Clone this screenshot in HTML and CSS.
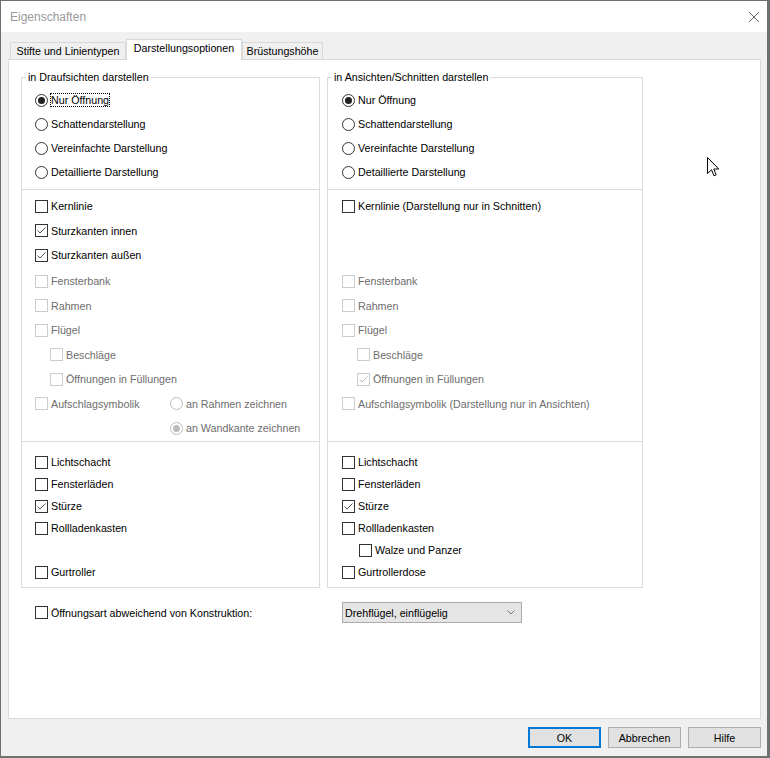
FILE: index.html
```html
<!DOCTYPE html>
<html lang="de">
<head>
<meta charset="utf-8">
<title>Eigenschaften</title>
<link rel="stylesheet" href="styles.css">
</head>
<body>
<div class="window">
  <div class="titlebar">
    <span class="title">Eigenschaften</span>
    <svg class="close" width="10" height="10" viewBox="0 0 10 10"><path d="M0 0L10 10M10 0L0 10"/></svg>
  </div>
  <div class="client">
    <div class="tabs">
      <div class="tab t1">Stifte und Linientypen</div>
      <div class="tab t2 active">Darstellungsoptionen</div>
      <div class="tab t3">Brüstungshöhe</div>
    </div>
    <div class="panel">
      <div class="groups">
        <div class="group left">
          <div class="group-title">in Draufsichten darstellen</div>
          <div class="sec sec1">
            <div class="row"><span class="radio on"></span><span class="focus">Nur Öffnung</span></div>
            <div class="row"><span class="radio"></span>Schattendarstellung</div>
            <div class="row"><span class="radio"></span>Vereinfachte Darstellung</div>
            <div class="row"><span class="radio"></span>Detaillierte Darstellung</div>
          </div>
          <div class="sec sec2">
            <div class="row"><span class="check"></span>Kernlinie</div>
            <div class="row"><span class="check"><svg viewBox="0 0 11 11"><path d="M1.5 5.5L4 8L9.5 2.5"/></svg></span>Sturzkanten innen</div>
            <div class="row"><span class="check"><svg viewBox="0 0 11 11"><path d="M1.5 5.5L4 8L9.5 2.5"/></svg></span>Sturzkanten außen</div>
            <div class="row dis gap-before"><span class="check"></span>Fensterbank</div>
            <div class="row dis"><span class="check"></span>Rahmen</div>
            <div class="row dis"><span class="check"></span>Flügel</div>
            <div class="row dis sub"><span class="check"></span>Beschläge</div>
            <div class="row dis sub"><span class="check"></span>Öffnungen in Füllungen</div>
            <div class="row dis"><span class="lead"><span class="check"></span>Aufschlagsymbolik</span><span class="radio"></span>an Rahmen zeichnen</div>
            <div class="row dis"><span class="lead"></span><span class="radio on"></span>an Wandkante zeichnen</div>
          </div>
          <div class="sec sec3">
            <div class="row"><span class="check"></span>Lichtschacht</div>
            <div class="row"><span class="check"></span>Fensterläden</div>
            <div class="row"><span class="check"><svg viewBox="0 0 11 11"><path d="M1.5 5.5L4 8L9.5 2.5"/></svg></span>Stürze</div>
            <div class="row"><span class="check"></span>Rollladenkasten</div>
            <div class="row"></div>
            <div class="row"><span class="check"></span>Gurtroller</div>
          </div>
        </div>
        <div class="group right">
          <div class="group-title">in Ansichten/Schnitten darstellen</div>
          <div class="sec sec1">
            <div class="row"><span class="radio on"></span>Nur Öffnung</div>
            <div class="row"><span class="radio"></span>Schattendarstellung</div>
            <div class="row"><span class="radio"></span>Vereinfachte Darstellung</div>
            <div class="row"><span class="radio"></span>Detaillierte Darstellung</div>
          </div>
          <div class="sec sec2">
            <div class="row"><span class="check"></span>Kernlinie (Darstellung nur in Schnitten)</div>
            <div class="row"></div>
            <div class="row"></div>
            <div class="row dis gap-before"><span class="check"></span>Fensterbank</div>
            <div class="row dis"><span class="check"></span>Rahmen</div>
            <div class="row dis"><span class="check"></span>Flügel</div>
            <div class="row dis sub"><span class="check"></span>Beschläge</div>
            <div class="row dis sub"><span class="check"><svg viewBox="0 0 11 11"><path d="M1.5 5.5L4 8L9.5 2.5"/></svg></span>Öffnungen in Füllungen</div>
            <div class="row dis"><span class="check"></span>Aufschlagsymbolik (Darstellung nur in Ansichten)</div>
            <div class="row"></div>
          </div>
          <div class="sec sec3">
            <div class="row"><span class="check"></span>Lichtschacht</div>
            <div class="row"><span class="check"></span>Fensterläden</div>
            <div class="row"><span class="check"><svg viewBox="0 0 11 11"><path d="M1.5 5.5L4 8L9.5 2.5"/></svg></span>Stürze</div>
            <div class="row"><span class="check"></span>Rollladenkasten</div>
            <div class="row sub2"><span class="check"></span>Walze und Panzer</div>
            <div class="row"><span class="check"></span>Gurtrollerdose</div>
          </div>
        </div>
      </div>
      <div class="extra">
        <div class="row extra-check"><span class="check"></span>Öffnungsart abweichend von Konstruktion:</div>
        <div class="select">
          <span>Drehflügel, einflügelig</span>
          <svg class="chev" width="8" height="5" viewBox="0 0 8 5"><path d="M0.5 0.5L4 4L7.5 0.5"/></svg>
        </div>
      </div>
    </div>
    <div class="buttons">
      <div class="btn default">OK</div>
      <div class="btn">Abbrechen</div>
      <div class="btn">Hilfe</div>
    </div>
  </div>
  <svg class="cursor" width="13" height="20" viewBox="0 0 13 20"><path d="M0.5 0.5V16.5L4.5 12.8L7 18.8L9.2 17.9L6.8 12H11.8Z"/></svg>
</div>
</body>
</html>
```

FILE: styles.css
```css
* { box-sizing: border-box; }

html, body {
  margin: 0;
  padding: 0;
  width: 770px;
  height: 758px;
  overflow: hidden;
  background: #6e6e6e;
}

body {
  font-family: "Liberation Sans", Arial, sans-serif;
  font-size: 10.7px;
  color: #000;
}

.window {
  position: relative;
  width: 770px;
  height: 758px;
  border: 1px solid #707070;
  border-right-width: 3px;
  border-bottom-width: 2px;
  background: #f0f0f0;
  display: flex;
  flex-direction: column;
}

.titlebar {
  height: 31px;
  flex: none;
  background: #fff;
  display: flex;
  align-items: center;
  justify-content: space-between;
  padding: 0 8px 0 9px;
}

.title {
  font-size: 12px;
  color: #999;
}

.close path {
  stroke: #666;
  stroke-width: 1;
  fill: none;
}

.client {
  flex: 1;
  padding: 7px 6px 0 7px;
  display: flex;
  flex-direction: column;
}

.tabs {
  height: 20px;
  display: flex;
  align-items: flex-end;
  padding-left: 2px;
}

.tab {
  height: 17px;
  border: 1px solid #d9d9d9;
  border-bottom: none;
  background: #f0f0f0;
  line-height: 16px;
  text-align: center;
  white-space: nowrap;
}

.tab.active {
  height: 21px;
  margin-bottom: -1px;
  background: #fff;
  position: relative;
  z-index: 1;
}

.t1 { width: 116px; }
.t2 { width: 116px; }
.t3 { width: 81px; }

.panel {
  height: 660px;
  flex: none;
  border: 1px solid #d9d9d9;
  background: #fff;
  padding: 17px 0 0 12px;
}

.groups {
  display: grid;
  grid-template-columns: 299px 316px;
  column-gap: 7px;
}

.group {
  border: 1px solid #dcdcdc;
  display: flex;
  flex-direction: column;
}

.group-title {
  align-self: flex-start;
  margin: -7px 0 0 4px;
  padding: 0 2px;
  height: 13px;
  line-height: 13px;
  background: #fff;
}

.sec { border-bottom: 1px solid #dcdcdc; }
.sec1 { padding: 4px 0 5px; }
.sec2 { padding: 4px 0 0.5px; }
.sec3 { padding: 9px 0 4px; border-bottom: none; }

.row {
  display: flex;
  align-items: center;
  gap: 3px;
  padding-left: 13px;
  white-space: nowrap;
}

.right .row { padding-left: 14px; }

.sec1 .row { height: 24px; }
.sec2 .row { height: 24.5px; }
.sec3 .row { height: 22px; }

.sec2 .row.gap-before { margin-top: 1.5px; }

.row.sub { padding-left: 28px; }
.right .row.sub { padding-left: 29px; }
.right .row.sub2 { padding-left: 31px; }

.lead {
  width: 132px;
  display: flex;
  align-items: center;
  gap: 3px;
}

.dis { color: #6d6d6d; }

.check {
  width: 13px;
  height: 13px;
  flex: none;
  border: 1px solid #333;
  background: #fff;
  display: flex;
}

.check svg {
  width: 11px;
  height: 11px;
}

.check path {
  fill: none;
  stroke: #555;
  stroke-width: 1;
}

.dis .check { border-color: #cccccc; }
.dis .check path { stroke: #c0c0c0; }

.radio {
  width: 13px;
  height: 13px;
  flex: none;
  border: 1px solid #333;
  border-radius: 50%;
  background: #fff;
  display: flex;
  align-items: center;
  justify-content: center;
}

.radio.on::after {
  content: "";
  width: 7px;
  height: 7px;
  border-radius: 50%;
  background: #222;
}

.dis .radio { border-color: #bcbcbc; }
.dis .radio.on::after { background: #bcbcbc; }

.focus {
  outline: 1px dotted #000;
  outline-offset: 0;
  line-height: 12px;
}

.extra {
  display: grid;
  grid-template-columns: 299px 316px;
  column-gap: 7px;
  margin-top: 14px;
}

.extra-check {
  height: 21px;
  padding-left: 14px;
}

.select {
  margin-left: 15px;
  width: 180px;
  height: 21px;
  border: 1px solid #acacac;
  background: #e5e5e5;
  display: flex;
  align-items: center;
  justify-content: space-between;
  padding: 0 6px 0 2px;
}

.chev path {
  fill: none;
  stroke: #777;
  stroke-width: 1;
}

.buttons {
  margin-top: 8px;
  display: flex;
  justify-content: flex-end;
  gap: 7px;
}

.btn {
  width: 73px;
  height: 21px;
  border: 1px solid #adadad;
  background: #e1e1e1;
  display: flex;
  align-items: center;
  justify-content: center;
}

.btn.default {
  border: 2px solid #0078d7;
}

.cursor {
  position: absolute;
  left: 706px;
  top: 156px;
}

.cursor path {
  fill: #fff;
  stroke: #000;
  stroke-width: 1;
  stroke-linejoin: miter;
}
```
